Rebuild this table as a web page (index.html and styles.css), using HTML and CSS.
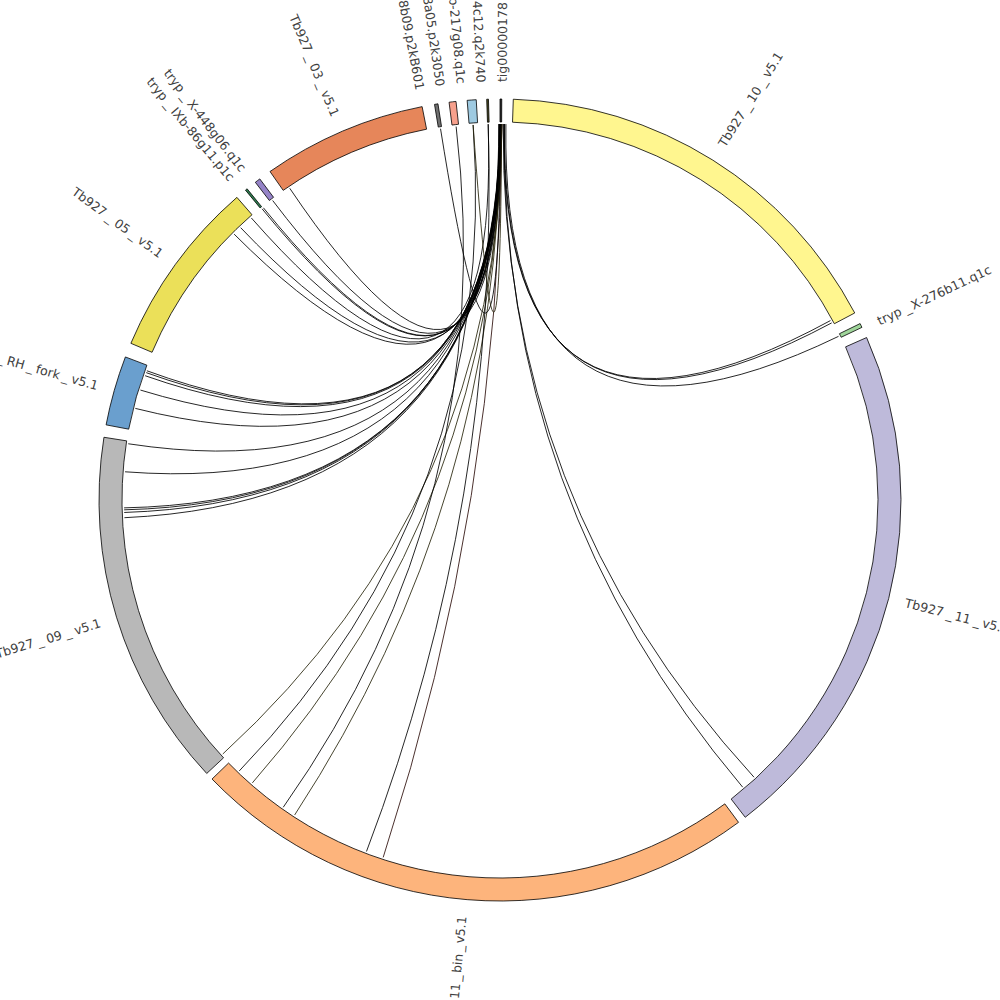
FILE: index.html
```html
<!DOCTYPE html>
<html lang="en">
<head>
<meta charset="utf-8">
<title>Genome links</title>
<link rel="stylesheet" href="styles.css">
</head>
<body>
<main class="canvas">
  <svg class="chart" width="1000" height="1000" viewBox="0 0 1000 1000">
    <g id="links" class="links"></g>
    <g id="segments" class="segments"></g>
    <g class="labels">
      <text class="lbl r" x="918" y="500" transform="rotate(-89.7 500 500)">tig00000178</text>
      <text class="lbl r" x="918" y="500" transform="rotate(-58 500 500)">Tb927<tspan dx="3.5">_</tspan><tspan dx="3.5">10</tspan><tspan dx="3.5">_</tspan><tspan dx="3.5">v5.1</tspan></text>
      <text class="lbl r" x="918" y="500" transform="rotate(-25.3 500 500)">tryp<tspan dx="4">_</tspan><tspan dx="1.5">X-276b11.q1c</tspan></text>
      <text class="lbl r" x="918" y="500" transform="rotate(14.2 500 500)">Tb927<tspan dx="3.5">_</tspan><tspan dx="2.5">11</tspan><tspan dx="3.5">_</tspan><tspan dx="2.5">v5.1</tspan></text>

      <text class="lbl l" x="82" y="500" transform="rotate(275.3 500 500)">Tb927<tspan dx="2">_</tspan><tspan dx="2">11</tspan><tspan dx="2">_</tspan><tspan dx="2">bin</tspan><tspan dx="2">_</tspan><tspan dx="2">v5.1</tspan></text>
      <text class="lbl l" x="82" y="500" transform="rotate(343 500 500)">Tb927<tspan dx="3.5">_</tspan><tspan dx="3.5">09</tspan><tspan dx="3.5">_</tspan><tspan dx="3.5">v5.1</tspan></text>
      <text class="lbl l" x="82" y="500" transform="rotate(15.9 500 500)">Tb927<tspan dx="3.5">_</tspan><tspan dx="3">RH</tspan><tspan dx="3">_</tspan><tspan dx="3">fork</tspan><tspan dx="3">_</tspan><tspan dx="3">v5.1</tspan></text>
      <text class="lbl l" x="82" y="500" transform="rotate(36 500 500)">Tb927<tspan dx="3.5">_</tspan><tspan dx="3.5">05</tspan><tspan dx="3.5">_</tspan><tspan dx="3.5">v5.1</tspan></text>
      <text class="lbl l" x="82" y="500" transform="rotate(50.2 500 500)">tryp<tspan dx="3.5">_</tspan><tspan dx="3.5">IXb-86g11.p1c</tspan></text>
      <text class="lbl l" x="82" y="500" transform="rotate(52.2 500 500)">tryp<tspan dx="3.5">_</tspan><tspan dx="3.5">X-448g06.q1c</tspan></text>
      <text class="lbl l" x="82" y="500" transform="rotate(66.9 500 500)">Tb927<tspan dx="3.5">_</tspan><tspan dx="3.5">03</tspan><tspan dx="3.5">_</tspan><tspan dx="3.5">v5.1</tspan></text>
      <text class="lbl l" x="82" y="500" transform="rotate(79 500 500)">tryp_X-1498b09.p2kB601</text>
      <text class="lbl l" x="82" y="500" transform="rotate(81.8 500 500)">tryp_X-1318a05.p2k3050</text>
      <text class="lbl l" x="82" y="500" transform="rotate(84.7 500 500)">tryp_IXb-217g08.q1c</text>
      <text class="lbl l" x="82" y="500" transform="rotate(87.4 500 500)">tryp_X-294c12.q2k740</text>
    </g>
  </svg>
</main>
<script src="script.js"></script>
</body>
</html>
```

FILE: styles.css
```css
html, body {
  margin: 0;
  padding: 0;
  background: #ffffff;
  overflow: hidden;
}

.canvas {
  width: 1000px;
  height: 1000px;
}

.chart {
  display: block;
}

.seg {
  stroke: #000000;
  stroke-width: 0.8;
  stroke-linejoin: miter;
}

.c10 { fill: #fff68f; }
.cx276 { fill: #9fd59a; }
.c11 { fill: #bebada; }
.cbin { fill: #fdb47c; }
.c09 { fill: #b8b8b8; }
.crh { fill: #6a9fce; }
.c05 { fill: #ebe059; }
.cixb { fill: #2e7d4f; }
.cx448 { fill: #9583c7; }
.c03 { fill: #e6865a; }
.c8b09 { fill: #707070; }
.c8a05 { fill: #f7a08c; }
.c217 { fill: #9ecae1; }
.c94 { fill: #4a4a20; }
.ctig { fill: #303030; }

.link {
  fill: none;
  stroke: #000000;
  stroke-width: 0.85;
}

.link.tint-olive { stroke: #26240a; }
.link.tint-red { stroke: #2a0c08; }

.lbl {
  font-family: "DejaVu Sans", sans-serif;
  font-size: 12.5px;
  fill: #404040;
  dominant-baseline: central;
}

.lbl.r { text-anchor: start; }
.lbl.l { text-anchor: end; }
```

FILE: script.js
```js
(function () {
  var C = 500, RO = 401, RI = 378, RL = 376;
  var NS = "http://www.w3.org/2000/svg";

  function pt(a, r) {
    var t = a * Math.PI / 180;
    return [C + r * Math.sin(t), C - r * Math.cos(t)];
  }
  function f(n) { return n.toFixed(2); }

  var SEGS = [
    ["c10", 1.9, 62.2],
    ["cx276", 63.9, 64.5],
    ["c11", 66.1, 142.3],
    ["cbin", 143.5, 225.9],
    ["c09", 227.0, 279.0],
    ["crh", 280.8, 290.9],
    ["c05", 293.0, 319.0],
    ["cixb", 320.6, 320.9],
    ["cx448", 322.4, 323.2],
    ["c03", 325.0, 348.8],
    ["c8b09", 350.6, 351.1],
    ["c8a05", 352.7, 353.7],
    ["c217", 355.3, 356.6],
    ["c94", 358.1, 358.35],
    ["ctig", 0.0, 0.25]
  ];

  var LINKS = [
    [0.1, 326.0], [359.8, 322.8], [0.0, 320.75], [358.2, 318.6], [0.2, 316.4], [359.9, 315.0],
    [0.0, 290.1], [0.2, 289.3], [359.9, 287.0], [0.1, 284.1],
    [0.0, 278.6], [0.1, 274.3], [0.2, 268.8], [0.15, 268.1], [0.25, 267.3],
    [0.3, 227.5, "tint-olive"],
    [355.9, 223.9], [0.2, 221.2, "tint-olive"], [353.3, 215.2], [0.1, 213.1, "tint-olive"],
    [358.2, 200.8], [0.3, 198.1, "tint-red"],
    [0.5, 137.5], [0.65, 139.8],
    [0.6, 61.5], [0.7, 61.9], [0.9, 64.2],
    [350.9, 0.05], [355.9, 0.25, "tint-olive"],
    [0.05, 268.5], [359.95, 289.8], [0.15, 321.0]
  ];

  var segG = document.getElementById("segments");
  SEGS.forEach(function (s) {
    var a = s[1], b = s[2];
    var span = (b - a + 360) % 360;
    var large = span > 180 ? 1 : 0;
    var p1 = pt(a, RO), p2 = pt(b, RO), p3 = pt(b, RI), p4 = pt(a, RI);
    var d = "M" + f(p1[0]) + " " + f(p1[1]) +
      " A" + RO + " " + RO + " 0 " + large + " 1 " + f(p2[0]) + " " + f(p2[1]) +
      " L" + f(p3[0]) + " " + f(p3[1]) +
      " A" + RI + " " + RI + " 0 " + large + " 0 " + f(p4[0]) + " " + f(p4[1]) + " Z";
    var el = document.createElementNS(NS, "path");
    el.setAttribute("d", d);
    el.setAttribute("class", "seg " + s[0]);
    segG.appendChild(el);
  });

  var linkG = document.getElementById("links");
  LINKS.forEach(function (l) {
    var p0 = pt(l[0], RL), p2 = pt(l[1], RL);
    var d = "M" + f(p0[0]) + " " + f(p0[1]) + " Q" + C + " " + C + " " + f(p2[0]) + " " + f(p2[1]);
    var el = document.createElementNS(NS, "path");
    el.setAttribute("d", d);
    el.setAttribute("class", "link" + (l[2] ? " " + l[2] : ""));
    linkG.appendChild(el);
  });
})();
```
